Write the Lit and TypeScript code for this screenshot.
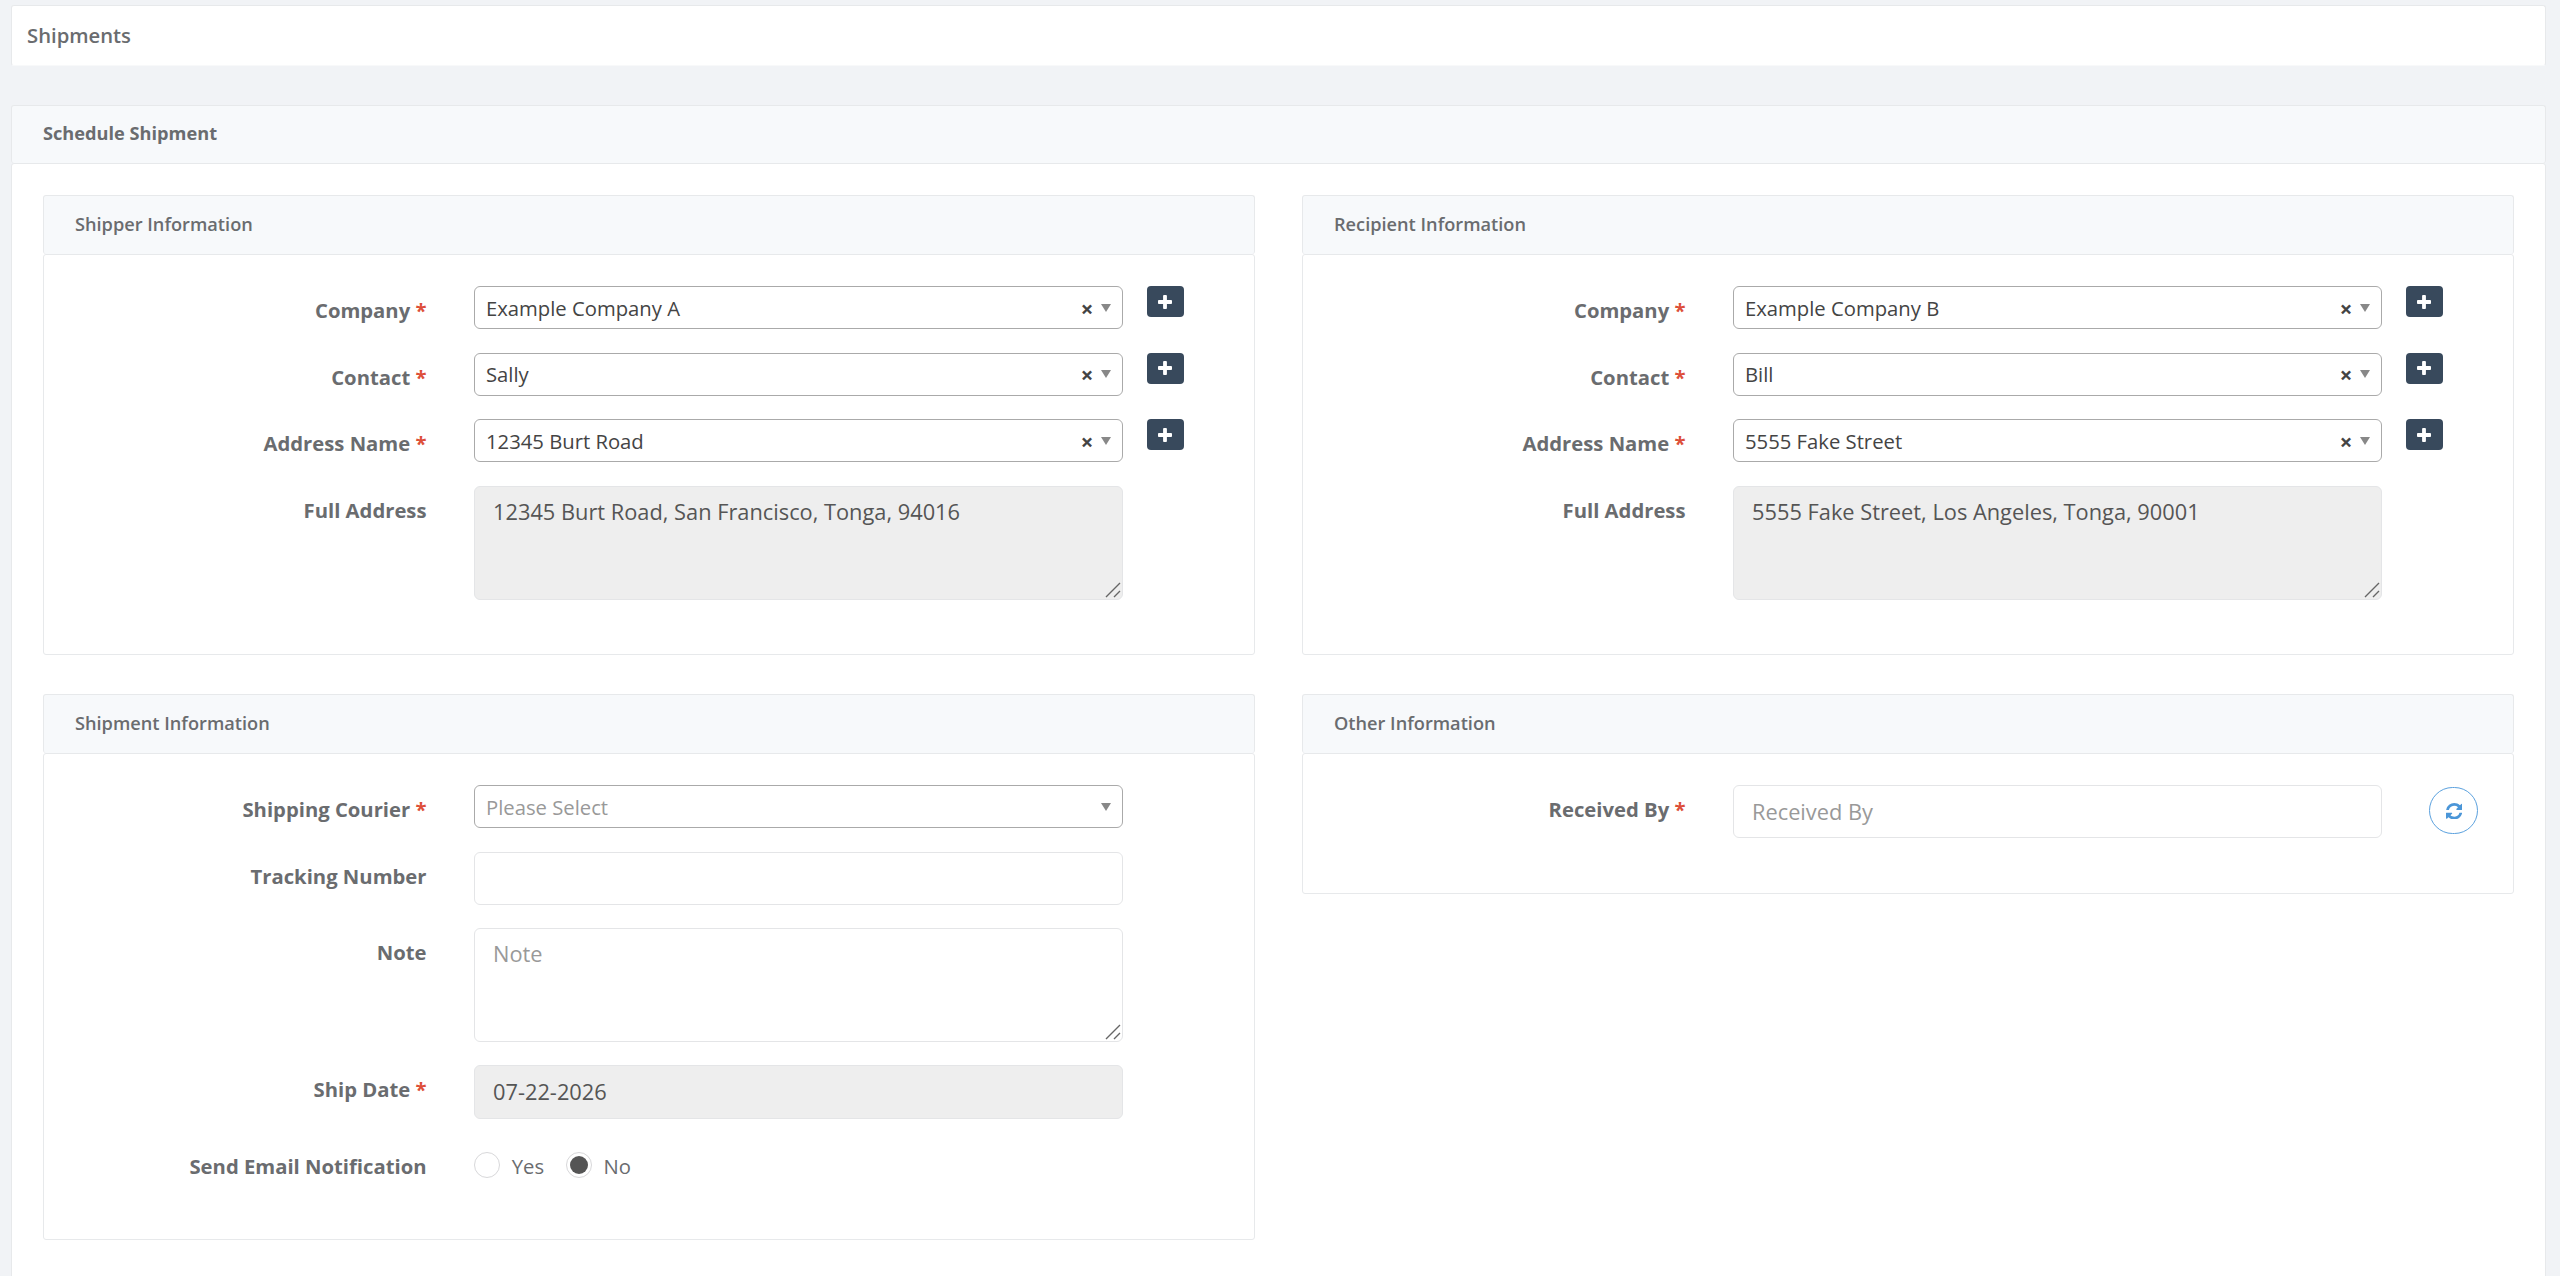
import { LitElement, html, css, svg, nothing, type TemplateResult } from "lit";
import { customElement } from "lit/decorators.js";

const plusIcon = svg`<path fill="currentColor" d="M1600 736v192q0 40-28 68t-68 28h-416v416q0 40-28 68t-68 28h-192q-40 0-68-28t-28-68v-416h-416q-40 0-68-28t-28-68v-192q0-40 28-68t68-28h416v-416q0-40 28-68t68-28h192q40 0 68 28t28 68v416h416q40 0 68 28t28 68z"/>`;
const refreshIcon = svg`<path fill="currentColor" d="M1511 928q0 5-1 7-64 268-268 434.5t-478 166.5q-146 0-282.5-55t-243.5-157l-129 129q-19 19-45 19t-45-19-19-45v-448q0-26 19-45t45-19h448q26 0 45 19t19 45-19 45l-137 137q71 66 161 102t187 36q134 0 250-65t186-179q11-17 53-117 8-23 30-23h192q13 0 22.5 9.5t9.5 22.5zm25-800v448q0 26-19 45t-45 19h-448q-26 0-45-19t-19-45 19-45l138-138q-148-137-349-137-134 0-250 65t-186 179q-11 17-53 117-8 23-30 23h-199q-13 0-22.5-9.5t-9.5-22.5v-7q65-268 270-434.5t480-166.5q146 0 284 55.5t245 156.5l130-129q19-19 45-19t45 19 19 45z"/>`;

@customElement("app-root")
export class AppRoot extends LitElement {
  static styles = css`
    :host {
      display: block;
      height: 1276px;
      overflow: hidden;
      box-sizing: border-box;
      background: #f1f3f6;
      color: #6a6c6f;
      font: 20.25px/28px "Open Sans", sans-serif;
    }
    * { box-sizing: border-box; }
    .page {
      display: flex;
      flex-direction: column;
      gap: 39px;
      height: 1400px;
      padding: 5px 14px 0 11px;
    }
    .title {
      flex: none;
      height: 61px;
      padding: 15px 15px;
      background: #fff;
      border: 1px solid #e7e9eb;
      border-bottom-color: #f8f9fa;
      border-radius: 3px;
      font-weight: 600;
    }
    .outer {
      flex: 1;
      display: flex;
      flex-direction: column;
    }
    .head {
      height: 59px;
      padding: 15px 31px;
      background: #f7f9fb;
      border: 1px solid #e7e9eb;
      border-bottom: 0;
      border-radius: 3px;
      font-size: 18.2px;
      line-height: 26px;
      font-weight: 600;
    }
    .head.strong {
      height: 58px;
      padding-top: 14px;
      font-weight: 700;
    }
    .content {
      flex: 1;
      display: grid;
      grid-template-columns: 1212px 1212px;
      column-gap: 47px;
      row-gap: 39px;
      align-content: start;
      align-items: start;
      padding: 31px;
      background: #fff;
      border: 1px solid #e7e9eb;
      border-radius: 3px;
    }
    .body {
      display: flex;
      flex-direction: column;
      gap: 23.7px;
      padding: 31px 0 55.3px;
      background: #fff;
      border: 1px solid #e7e9eb;
      border-radius: 3px;
    }
    .row {
      display: grid;
      grid-template-columns: 430px 649.4px auto;
      align-items: start;
      justify-content: start;
    }
    .label {
      height: 38px;
      padding: 10px 47.5px 0 0;
      text-align: right;
      font-weight: 700;
    }
    .req { color: #dd4f3a; }
    .select {
      display: flex;
      align-items: center;
      height: 43px;
      padding: 0 11px;
      border: 1px solid #aaa;
      border-radius: 6px;
      background: #fff;
      color: #444;
    }
    .value { flex: 1; }
    .value.hint { color: #999; }
    .clear {
      margin-right: 8px;
      font-size: 22px;
      font-weight: 700;
    }
    .arrow {
      border: 5.5px solid transparent;
      border-top: 8.5px solid #888;
      border-bottom: 0;
    }
    .input {
      position: relative;
      height: 52.5px;
      padding: 10px 18px;
      border: 1px solid #e4e5e7;
      border-radius: 6px;
      background: #fff;
      color: #555;
      font-size: 21.8px;
      line-height: 31px;
    }
    .area { height: 114px; padding-top: 9px; margin-bottom: -1px; }
    .off { background: #eee; }
    .date { height: 53.6px; }
    .input.hint { color: #999; }
    .grip {
      position: absolute;
      right: 1px;
      bottom: 1px;
      width: 16px;
      height: 16px;
    }
    .add {
      display: flex;
      align-items: center;
      justify-content: center;
      width: 37px;
      height: 31px;
      margin-left: 23.5px;
      border-radius: 4px;
      background: #38495c;
      color: #fff;
    }
    .plus { width: 14px; height: 14px; display: block; }
    .refresh {
      display: flex;
      align-items: center;
      justify-content: center;
      width: 49px;
      height: 47px;
      margin: 2px 0 -1px 47px;
      border: 1px solid #5ba1de;
      border-radius: 24px;
      color: #4b96d8;
    }
    .sync { width: 16.5px; height: 16.5px; display: block; }
    .radios {
      display: flex;
      height: 41px;
      padding-top: 10px;
    }
    .dot {
      width: 26px;
      height: 26px;
      margin-right: 11.8px;
      padding: 3px;
      border: 1px solid #d8d8da;
      border-radius: 50%;
    }
    .dot.on::before {
      content: "";
      display: block;
      width: 18px;
      height: 18px;
      border-radius: 50%;
      background: #555;
    }
    .opt { margin-right: 21.6px; }
  `;

  private row(label: string, required: boolean, control: TemplateResult, extra: TemplateResult | typeof nothing = nothing) {
    return html`<div class="row">
      <div class="label">${label}${required ? html` <span class="req">*</span>` : nothing}</div>
      ${control}${extra}
    </div>`;
  }

  private select(value: string) {
    return html`<div class="select"><span class="value">${value}</span><span class="clear">×</span><span class="arrow"></span></div>`;
  }

  private area(text: string, cls: string) {
    return html`<div class="input area ${cls}">${text}<svg class="grip" viewBox="0 0 16 16"><path d="M1 15L15 1M9 15L15 9" stroke="#666" stroke-width="1.4" fill="none"/></svg></div>`;
  }

  private party(title: string, company: string, contact: string, name: string, address: string) {
    const add = html`<div class="add"><svg class="plus" viewBox="192 128 1408 1408">${plusIcon}</svg></div>`;
    return html`<section>
      <div class="head">${title}</div>
      <div class="body">
        ${this.row("Company", true, this.select(company), add)}
        ${this.row("Contact", true, this.select(contact), add)}
        ${this.row("Address Name", true, this.select(name), add)}
        ${this.row("Full Address", false, this.area(address, "off"))}
      </div>
    </section>`;
  }

  render() {
    return html`<div class="page">
      <div class="title">Shipments</div>
      <div class="outer">
        <div class="head strong">Schedule Shipment</div>
        <div class="content">
          ${this.party("Shipper Information", "Example Company A", "Sally", "12345 Burt Road", "12345 Burt Road, San Francisco, Tonga, 94016")}
          ${this.party("Recipient Information", "Example Company B", "Bill", "5555 Fake Street", "5555 Fake Street, Los Angeles, Tonga, 90001")}
          <section>
            <div class="head">Shipment Information</div>
            <div class="body">
              ${this.row("Shipping Courier", true, html`<div class="select"><span class="value hint">Please Select</span><span class="arrow"></span></div>`)}
              ${this.row("Tracking Number", false, html`<div class="input"></div>`)}
              ${this.row("Note", false, this.area("Note", "hint"))}
              ${this.row("Ship Date", true, html`<div class="input off date">07-22-2026</div>`)}
              ${this.row("Send Email Notification", false, html`<div class="radios"><span class="dot"></span><span class="opt">Yes</span><span class="dot on"></span><span class="opt">No</span></div>`)}
            </div>
          </section>
          <section>
            <div class="head">Other Information</div>
            <div class="body">
              ${this.row("Received By", true, html`<div class="input hint">Received By</div>`, html`<div class="refresh"><svg class="sync" viewBox="0 0 1536 1536">${refreshIcon}</svg></div>`)}
            </div>
          </section>
        </div>
      </div>
    </div>`;
  }
}
